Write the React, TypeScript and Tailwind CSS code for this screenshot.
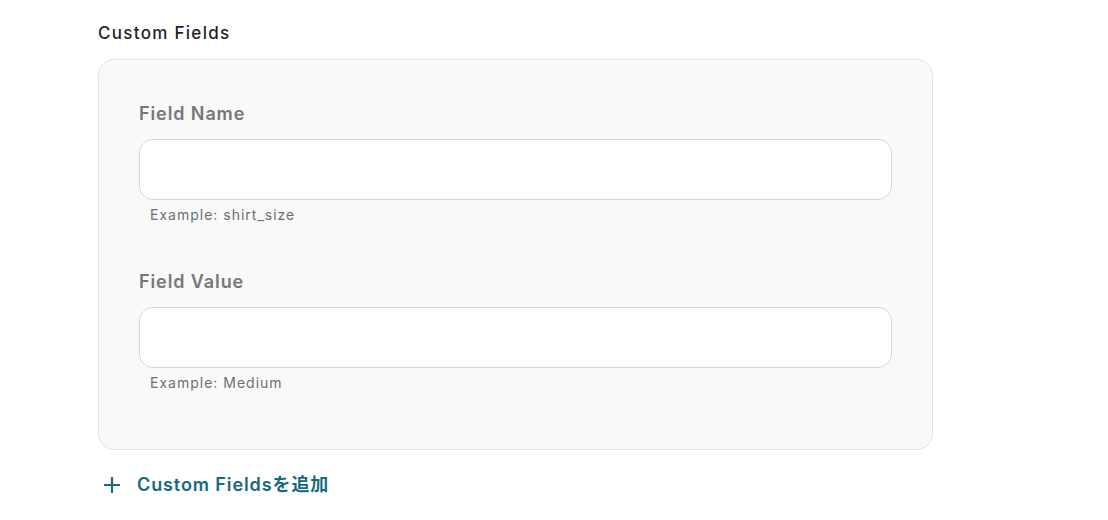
import React from "react";

const fields = [
  { label: "Field Name", example: "Example: shirt_size" },
  { label: "Field Value", example: "Example: Medium" },
];

export default function App() {
  return (
    <div
      className="min-h-[520px] bg-white pl-[98px] pt-[21px]"
      style={{ fontFamily: "Inter, 'Noto Sans CJK JP', sans-serif" }}
    >
      <h2 className="text-[17px] leading-[24px] font-medium text-[#1f1f1f] tracking-[1.3px]">
        Custom Fields
      </h2>
      <div className="mt-[14px] w-[835px] rounded-[16px] border border-[#e4e4e4] bg-[#f9f9f9] px-[40px] pt-[40px] pb-[56px]">
        {fields.map((field, index) => (
          <div key={field.label} className={index > 0 ? "mt-[43px]" : ""}>
            <label className="block text-[18px] leading-[27px] font-semibold text-[#777777] tracking-[0.9px]">
              {field.label}
            </label>
            <input
              type="text"
              className="mt-[12px] block h-[61px] w-full rounded-[14px] border border-[#d4d6db] bg-white px-4 outline-none"
            />
            <p className="mt-[5px] pl-[11px] text-[14px] leading-[20px] text-[#6b7078] tracking-[1px]">
              {field.example}
            </p>
          </div>
        ))}
      </div>
      <button className="mt-[21px] flex items-center gap-[16px] pl-[5px] text-[#176a7e]">
        <svg width="18" height="18" viewBox="0 0 18 18" fill="none">
          <path d="M9 1v16M1 9h16" stroke="currentColor" strokeWidth="2.2" />
        </svg>
        <span className="text-[18px] leading-[27px] font-semibold tracking-[0.9px]">
          Custom Fieldsを追加
        </span>
      </button>
    </div>
  );
}
